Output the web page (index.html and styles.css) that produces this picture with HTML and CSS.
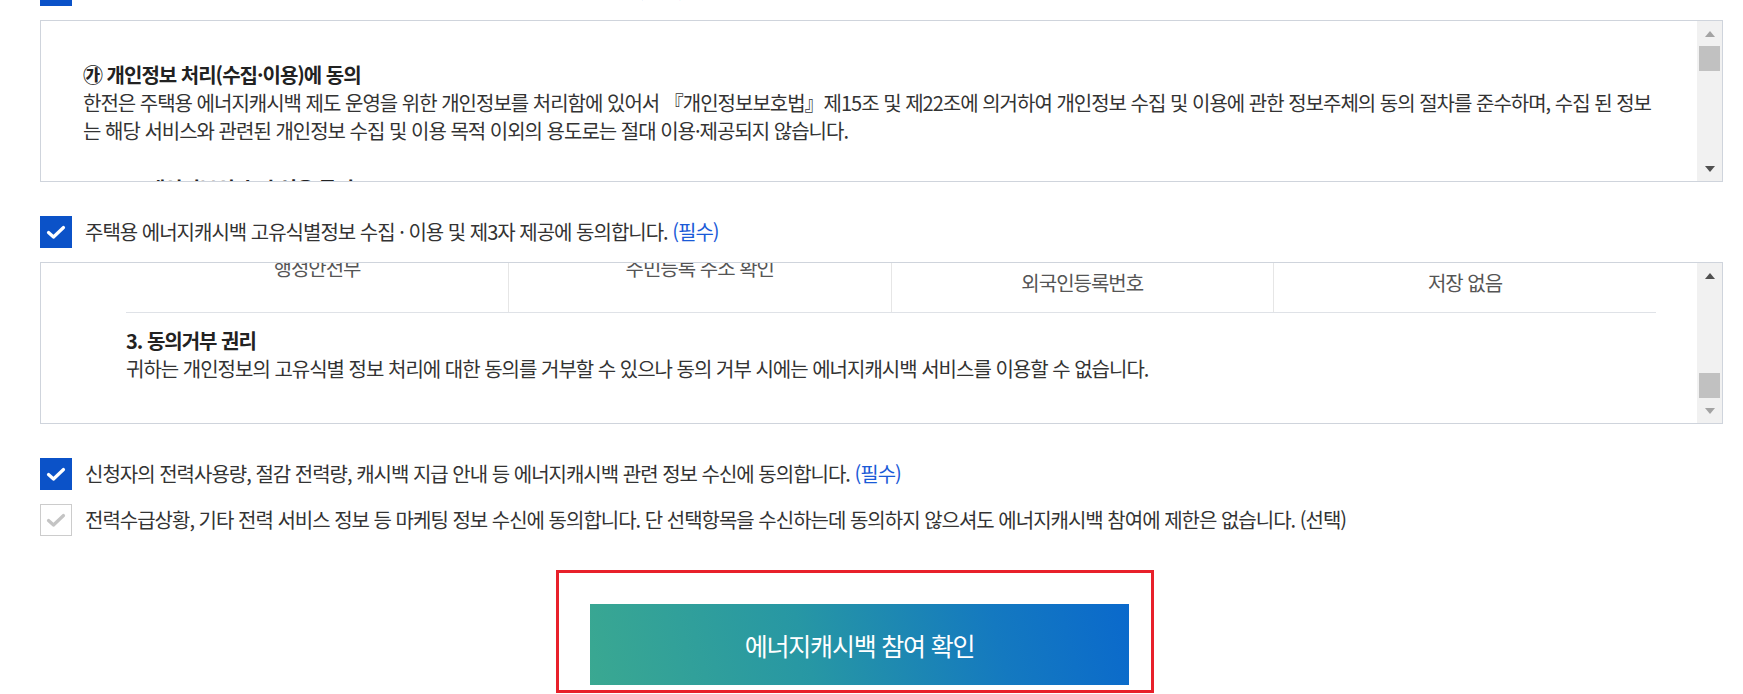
FILE: index.html
```html
<!DOCTYPE html>
<html lang="ko">
<head>
<meta charset="utf-8">
<title>에너지캐시백 참여 동의</title>
<link rel="stylesheet" href="styles.css">
</head>
<body>
<div class="page">
  <div class="agree">
    <span class="chk on"><svg viewBox="0 0 32 32"><polyline points="8.5,16.5 13.5,21 23.5,11.5"/></svg></span>
    <span class="label">주택용 에너지캐시백 개인정보 수집 · 이용 및 제3자 제공에 동의합니다. <em class="req">(필수)</em></span>
  </div>

  <div class="terms">
    <div class="terms-body">
      <p class="tit">㉮ 개인정보 처리(수집·이용)에 동의</p>
      <p>한전은 주택용 에너지캐시백 제도 운영을 위한 개인정보를 처리함에 있어서 『개인정보보호법』제15조 및 제22조에 의거하여 개인정보 수집 및 이용에 관한 정보주체의 동의 절차를 준수하며, 수집 된 정보는 해당 서비스와 관련된 개인정보 수집 및 이용 목적 이외의 용도로는 절대 이용·제공되지 않습니다.</p>
      <div class="sub sub-first">
        <p class="tit">1. 개인정보의 수집·이용 목적</p>
        <p>주택용 에너지캐시백 참여 신청 및 캐시백 지급</p>
      </div>
    </div>
    <div class="sb">
      <div class="sb-btn"><span class="arr up dim"></span></div>
      <div class="sb-track"><div class="sb-thumb"></div></div>
      <div class="sb-btn"><span class="arr down"></span></div>
    </div>
  </div>

  <div class="agree">
    <span class="chk on"><svg viewBox="0 0 32 32"><polyline points="8.5,16.5 13.5,21 23.5,11.5"/></svg></span>
    <span class="label">주택용 에너지캐시백 고유식별정보 수집 · 이용 및 제3자 제공에 동의합니다. <em class="req">(필수)</em></span>
  </div>

  <div class="terms">
    <div class="terms-body at-end">
      <div class="sub">
        <p class="tit">2. 고유식별정보 제3자 제공</p>
        <table class="grid">
          <tr>
            <th>제공받는 자</th>
            <th class="bl">제공 목적</th>
            <th class="bl">제공 항목</th>
            <th class="bl">보유 기간</th>
          </tr>
          <tr>
            <td class="mid">행정안전부</td>
            <td class="mid bl">주민등록 주소 확인</td>
            <td class="low bl">외국인등록번호</td>
            <td class="low bl">저장 없음</td>
          </tr>
        </table>
        <p class="tit refuse">3. 동의거부 권리</p>
        <p>귀하는 개인정보의 고유식별 정보 처리에 대한 동의를 거부할 수 있으나 동의 거부 시에는 에너지캐시백 서비스를 이용할 수 없습니다.</p>
      </div>
    </div>
    <div class="sb end">
      <div class="sb-btn"><span class="arr up"></span></div>
      <div class="sb-track"><div class="sb-thumb"></div></div>
      <div class="sb-btn"><span class="arr down dim"></span></div>
    </div>
  </div>

  <div class="agree">
    <span class="chk on"><svg viewBox="0 0 32 32"><polyline points="8.5,16.5 13.5,21 23.5,11.5"/></svg></span>
    <span class="label">신청자의 전력사용량, 절감 전력량, 캐시백 지급 안내 등 에너지캐시백 관련 정보 수신에 동의합니다. <em class="req">(필수)</em></span>
  </div>
  <div class="agree">
    <span class="chk off"><svg viewBox="0 0 32 32"><polyline points="8.5,16.5 13.5,21 23.5,11.5"/></svg></span>
    <span class="label">전력수급상황, 기타 전력 서비스 정보 등 마케팅 정보 수신에 동의합니다. 단 선택항목을 수신하는데 동의하지 않으셔도 에너지캐시백 참여에 제한은 없습니다. (선택)</span>
  </div>

  <div class="btn-area">
    <div class="highlight">
      <button class="btn" type="button">에너지캐시백 참여 확인</button>
    </div>
  </div>
</div>
</body>
</html>
```

FILE: styles.css
```css
* { box-sizing: border-box; }

html, body {
  margin: 0;
  padding: 0;
  background: #fff;
  overflow: hidden;
}

body {
  font-family: "Noto Sans CJK KR", "Noto Sans", sans-serif;
  font-size: 20px;
  letter-spacing: -1px;
  color: #333;
}

p { margin: 0; }

.page {
  padding: 0 20px 0 40px;
  margin-top: -26px;
}

/* agreement rows */
.agree {
  display: flex;
  align-items: center;
  gap: 13px;
  height: 32px;
  line-height: 32px;
  margin-top: 14px;
}
.terms + .agree { margin-top: 34px; }
.agree:first-child { margin-top: 0; }

.chk {
  flex: none;
  width: 32px;
  height: 32px;
  display: block;
}
.chk svg { display: block; width: 32px; height: 32px; }
.chk polyline {
  fill: none;
  stroke-width: 3.2;
  stroke-linecap: round;
  stroke-linejoin: round;
}
.chk.on { background: #0b52c8; }
.chk.on polyline { stroke: #fff; }
.chk.off { background: #fff; border: 1px solid #cccccc; }
.chk.off svg { margin: -1px; }
.chk.off polyline { stroke: #c4c4c4; }

.label { white-space: nowrap; }
.req { font-style: normal; color: #1a5ad7; }

/* terms boxes */
.terms {
  display: flex;
  height: 162px;
  margin-top: 14px;
  border: 1px solid #cfd4dc;
  background: #fff;
}

.terms-body {
  flex: 1;
  min-width: 0;
  overflow: hidden;
  padding: 40px 41px 40px 42px;
  line-height: 28px;
  color: #333;
}
.terms-body.at-end {
  display: flex;
  flex-direction: column;
  justify-content: flex-end;
}
.terms-body.at-end > * { flex: none; }

.tit { font-weight: 700; color: #222; }

.sub { margin-left: 43px; }
.sub-first { margin-top: 30px; }
.refuse { margin-top: 14px; }

.grid {
  width: 100%;
  table-layout: fixed;
  border-collapse: collapse;
  margin-top: 14px;
}
.grid th,
.grid td {
  padding: 16px 10px;
  text-align: center;
  vertical-align: middle;
  font-weight: 400;
  color: #555;
  line-height: 28px;
  border-bottom: 1px solid #dfe2e7;
}
.grid th { background: #f7f8fa; }
.grid td.mid { padding: 30px 10px; }
.grid td.low { vertical-align: bottom; padding: 0 10px 15px; }
.grid .bl { border-left: 1px solid #e6e6e6; }

/* scrollbar look-alike */
.sb {
  flex: none;
  width: 25px;
  background: #f1f1f1;
  display: flex;
  flex-direction: column;
}
.sb-btn {
  height: 25px;
  display: flex;
  align-items: center;
  justify-content: center;
}
.sb-track {
  flex: 1;
  display: flex;
  flex-direction: column;
}
.sb.end .sb-track { justify-content: flex-end; }
.sb-thumb {
  width: 21px;
  height: 25px;
  margin-left: 2px;
  background: #c1c1c1;
}
.arr {
  width: 0;
  height: 0;
  border-left: 5px solid transparent;
  border-right: 5px solid transparent;
}
.arr.up { border-bottom: 6px solid #505050; }
.arr.down { border-top: 6px solid #505050; }
.arr.up.dim { border-bottom-color: #a3a3a3; }
.arr.down.dim { border-top-color: #a3a3a3; }

/* confirm button */
.btn-area {
  display: flex;
  margin-top: 34px;
  padding-left: 516px;
}
.highlight {
  width: 598px;
  height: 123px;
  border: 3px solid #e8202a;
  padding: 31px 22px 5px 31px;
}
.btn {
  display: flex;
  align-items: center;
  justify-content: center;
  width: 539px;
  height: 81px;
  border: 0;
  margin: 0;
  padding: 0;
  font-family: inherit;
  font-size: 25px;
  letter-spacing: -1.2px;
  color: #fff;
  background: linear-gradient(75deg, #3aa891 0%, #2797a4 40%, #1479c0 75%, #0a69cc 100%);
  cursor: pointer;
}
```
